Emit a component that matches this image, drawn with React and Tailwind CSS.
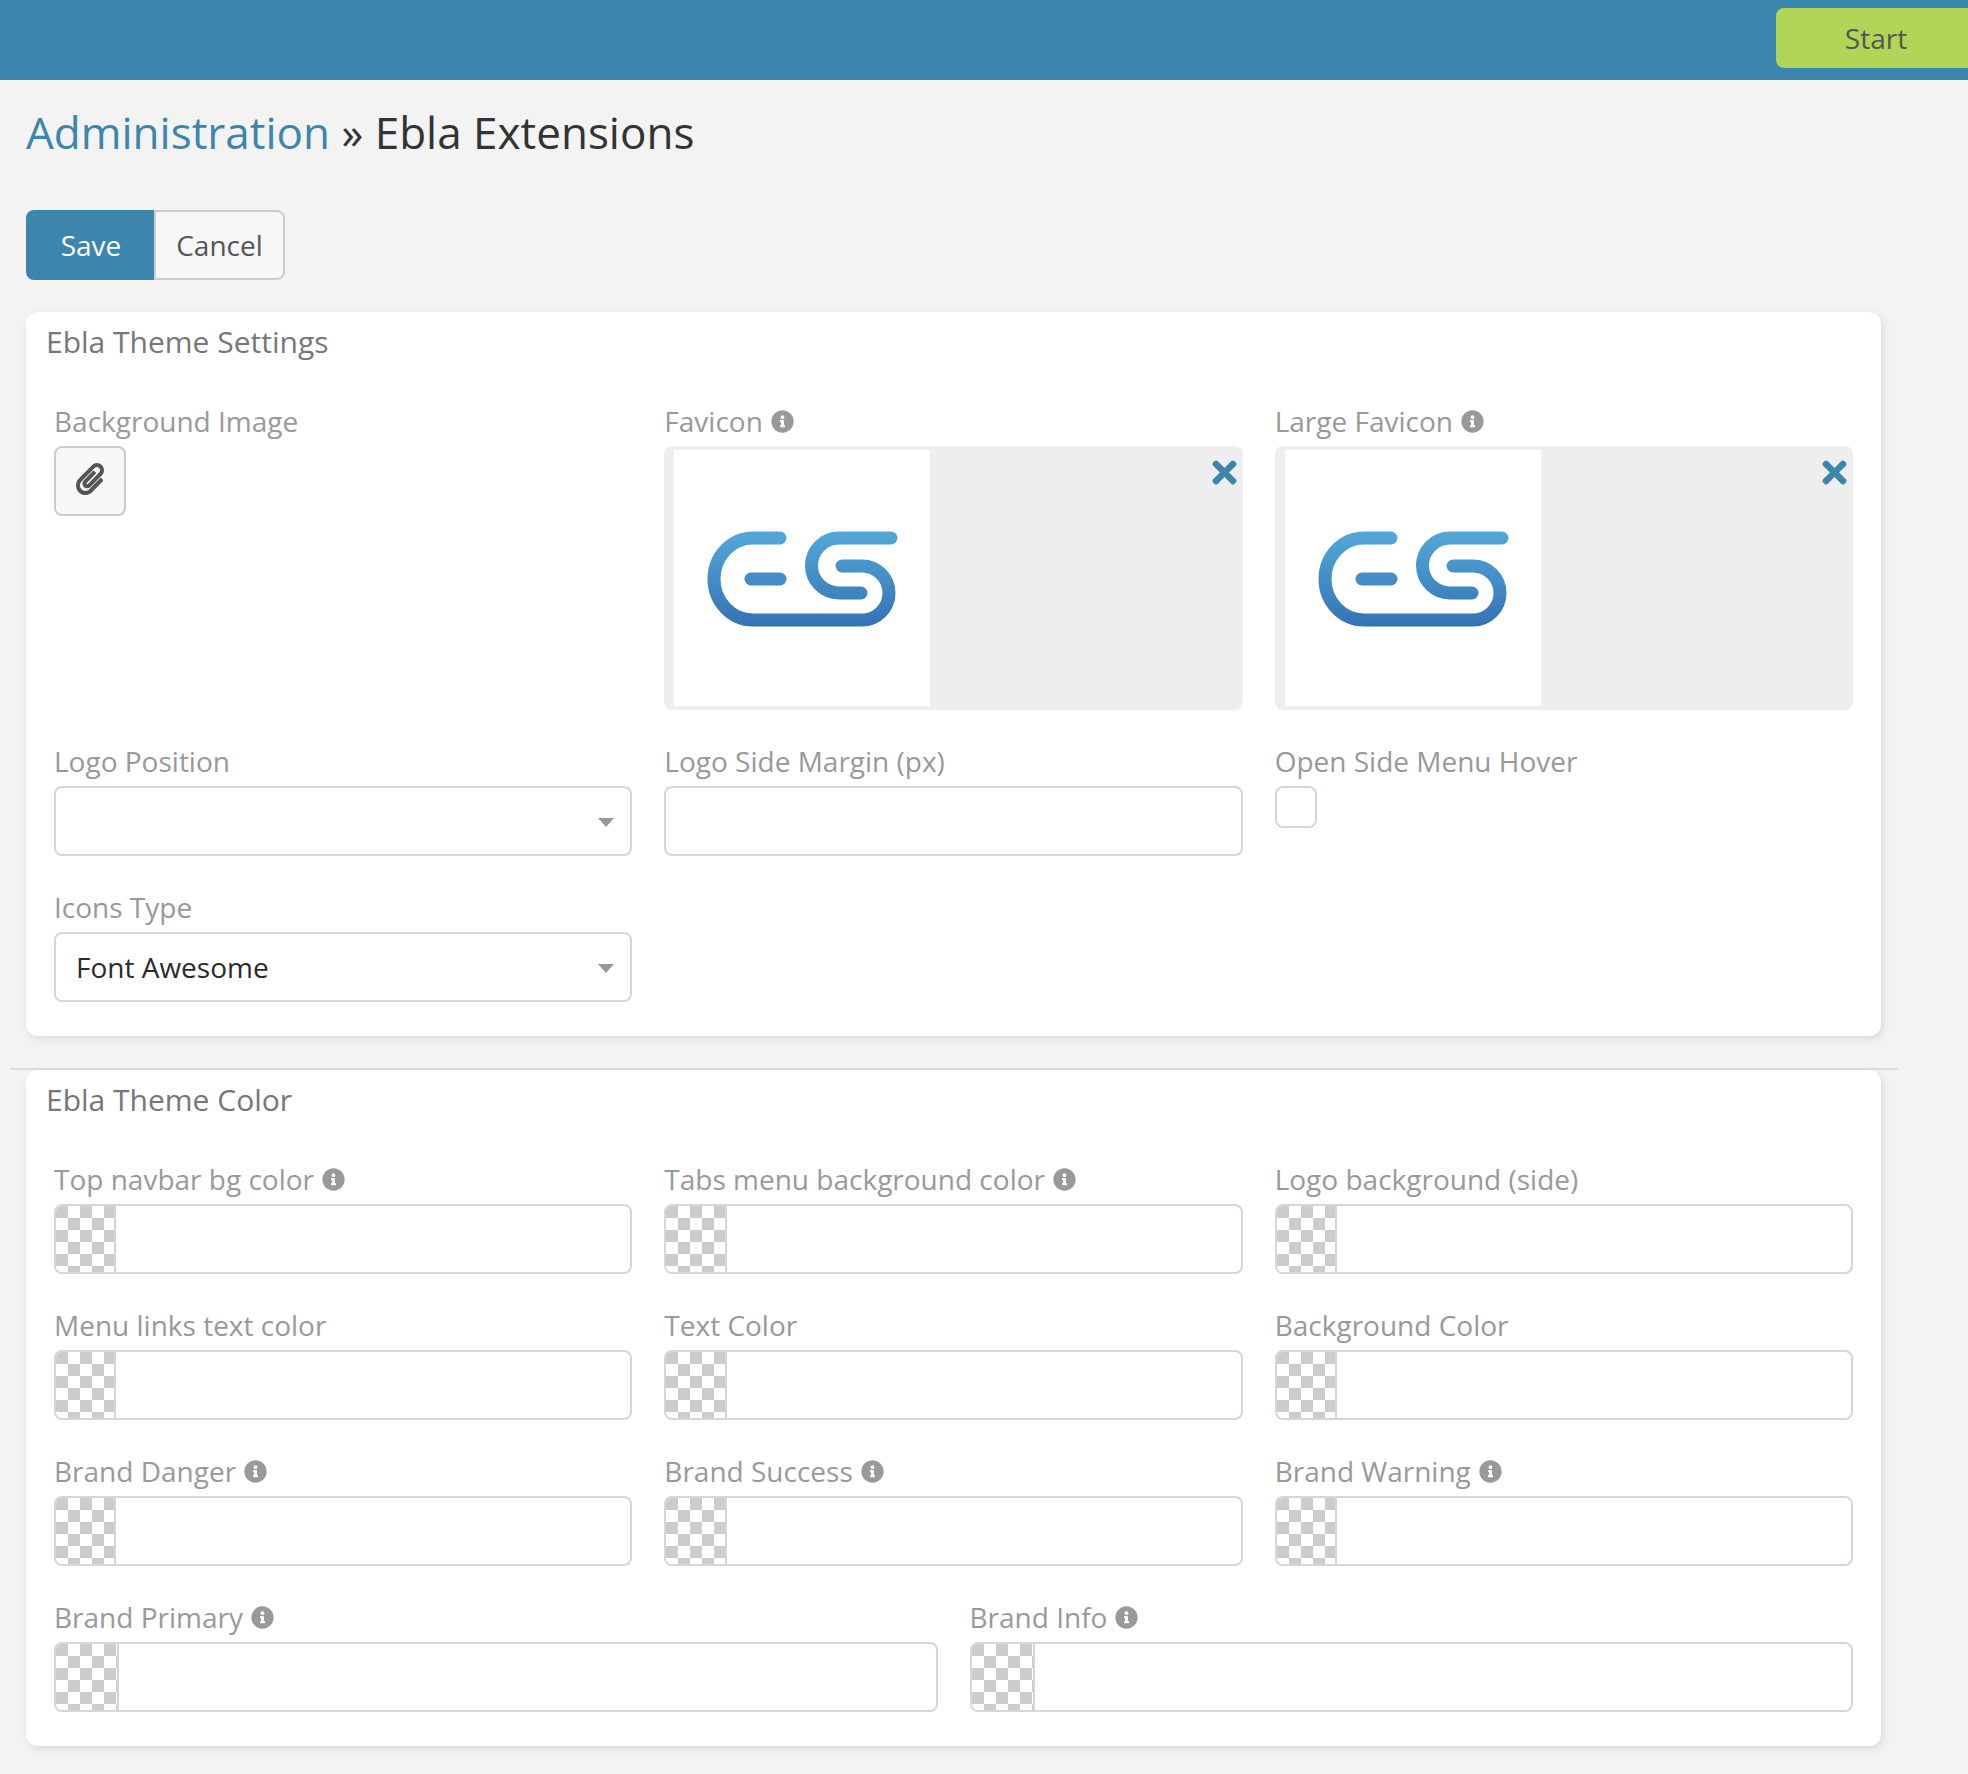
import { FaInfoCircle, FaPaperclip, FaTimes } from "react-icons/fa";

const Info = () => <FaInfoCircle className="ml-2 inline-block text-[23px] text-[#999] align-[-1px]" />;

const Logo = ({ id }) => (
  <svg viewBox="0 0 256 256" className="h-64 w-64">
    <defs>
      <linearGradient id={id} gradientUnits="userSpaceOnUse" x1="0" y1="80" x2="0" y2="178">
        <stop offset="0" stopColor="#54a9d9" />
        <stop offset="1" stopColor="#3471b4" />
      </linearGradient>
    </defs>
    <g fill="none" stroke={`url(#${id})`} strokeWidth="13" strokeLinecap="round">
      <path d="M106 88H79A39 41 0 0 0 79 170H188A27 27 0 0 0 188 116H168" />
      <path d="M77 129H106" />
      <path d="M217 88H165A27.5 27.5 0 0 0 165 143H187" />
    </g>
  </svg>
);

const Label = ({ text, info }) => (
  <label className="block h-[44px] text-[28px] leading-[38px] text-[#999]">
    {text}
    {info && <Info />}
  </label>
);

const Caret = () => (
  <span className="absolute right-[16px] top-[30px] h-0 w-0 border-x-[8px] border-t-[9px] border-x-transparent border-t-[#999]" />
);

const SelectField = ({ label, value }) => (
  <div>
    <Label text={label} />
    <div className="relative h-[70px] rounded-lg border-2 border-[#d2d8d6] bg-white pl-[20px] text-[28px] leading-[66px] text-[#2b2b2b]">
      {value}
      <Caret />
    </div>
  </div>
);

const TextField = ({ label }) => (
  <div>
    <Label text={label} />
    <div className="h-[70px] rounded-lg border-2 border-[#d2d8d6] bg-white" />
  </div>
);

const ImageField = ({ label, id }) => (
  <div>
    <Label text={label} info />
    <div className="relative flex h-[264px] items-center rounded-lg bg-[#eeeeee] pl-[10px]">
      <div className="bg-white">
        <Logo id={id} />
      </div>
      <FaTimes className="absolute right-[1px] top-[9px] text-[35px] text-[#3c85ad]" />
    </div>
  </div>
);

const ColorField = ({ label, info, swatch = "w-[60px]" }) => (
  <div>
    <Label text={label} info={info} />
    <div className="flex h-[70px] overflow-hidden rounded-lg border-2 border-[#d2d8d6] bg-white">
      <div
        className={`h-full border-r-2 border-[#d5d5d5] bg-[repeating-conic-gradient(#ffffff_0_25%,#cccccc_0_50%)] bg-[length:24px_24px] ${swatch}`}
      />
    </div>
  </div>
);

const Card = ({ title, children, className }) => (
  <div className={`ml-[26px] w-[1855px] rounded-xl bg-white shadow-[2px_3px_8px_rgba(0,0,0,0.1)] ${className}`}>
    <h2 className="pl-[20px] text-[30px] leading-[38px] text-[#777]">{title}</h2>
    {children}
  </div>
);

const App = () => {
  return (
    <div className="min-h-[1774px] bg-[#f3f3f3] font-['Open_Sans',sans-serif]">
      {/* Top bar */}
      <div className="flex h-20 justify-end bg-[#3c85ad] pt-2">
        <div className="flex h-[60px] w-[192px] items-center justify-center rounded-l-lg bg-[#b0d557] pl-2 text-[28px] text-[#555]">
          Start
        </div>
      </div>

      <h1 className="ml-[26px] mt-[23px] h-[58px] text-[44px] leading-[58px] text-[#333]">
        <span className="text-[#3c85ad]">Administration</span> » Ebla Extensions
      </h1>

      {/* Buttons */}
      <div className="ml-[26px] mt-[49px] flex h-[70px] text-[28px]">
        <div className="flex w-[128px] items-center justify-center rounded-l-lg bg-[#3c85ad] pl-0.5 text-white">Save</div>
        <div className="flex w-[131px] items-center justify-center rounded-r-lg border-2 border-[#ccc] bg-[#f7f7f7] text-[#555]">
          Cancel
        </div>
      </div>

      {/* Theme settings */}
      <Card title="Ebla Theme Settings" className="mt-8 h-[724px] pt-[11px]">
        <div className="mx-[28px] mt-[41px] grid grid-cols-3 gap-x-8">
          <div>
            <Label text="Background Image" />
            <div className="flex h-[70px] w-[72px] items-center justify-center rounded-lg border-2 border-[#ccc] bg-[#f7f7f7]">
              <FaPaperclip className="mb-1 text-[32px] text-[#555]" />
            </div>
          </div>
          <ImageField label="Favicon" id="logo-a" />
          <ImageField label="Large Favicon" id="logo-b" />
        </div>
        <div className="mx-[28px] mt-[32px] grid grid-cols-3 gap-x-8">
          <SelectField label="Logo Position" />
          <TextField label="Logo Side Margin (px)" />
          <div>
            <Label text="Open Side Menu Hover" />
            <div className="h-[42px] w-[42px] rounded-lg border-2 border-[#d2d8d6] bg-white" />
          </div>
        </div>
        <div className="mx-[28px] mt-[32px] grid grid-cols-3 gap-x-8">
          <SelectField label="Icons Type" value="Font Awesome" />
        </div>
      </Card>

      <div className="ml-[10px] mt-[32px] h-0.5 w-[1888px] bg-[#dddddd]" />

      {/* Theme colors */}
      <Card title="Ebla Theme Color" className="h-[676px] pt-[11px]">
        <div className="mx-[28px] mt-[41px] flex flex-col gap-y-[32px]">
          <div className="grid grid-cols-3 gap-x-8">
            <ColorField label="Top navbar bg color" info />
            <ColorField label="Tabs menu background color" info swatch="w-[61px]" />
            <ColorField label="Logo background (side)" />
          </div>
          <div className="grid grid-cols-3 gap-x-8">
            <ColorField label="Menu links text color" />
            <ColorField label="Text Color" swatch="w-[61px]" />
            <ColorField label="Background Color" />
          </div>
          <div className="grid grid-cols-3 gap-x-8">
            <ColorField label="Brand Danger" info />
            <ColorField label="Brand Success" info swatch="w-[61px]" />
            <ColorField label="Brand Warning" info />
          </div>
          <div className="grid grid-cols-2 gap-x-8">
            <ColorField label="Brand Primary" info swatch="w-[63px]" />
            <ColorField label="Brand Info" info swatch="w-[63px]" />
          </div>
        </div>
      </Card>
    </div>
  );
};

export default App;
